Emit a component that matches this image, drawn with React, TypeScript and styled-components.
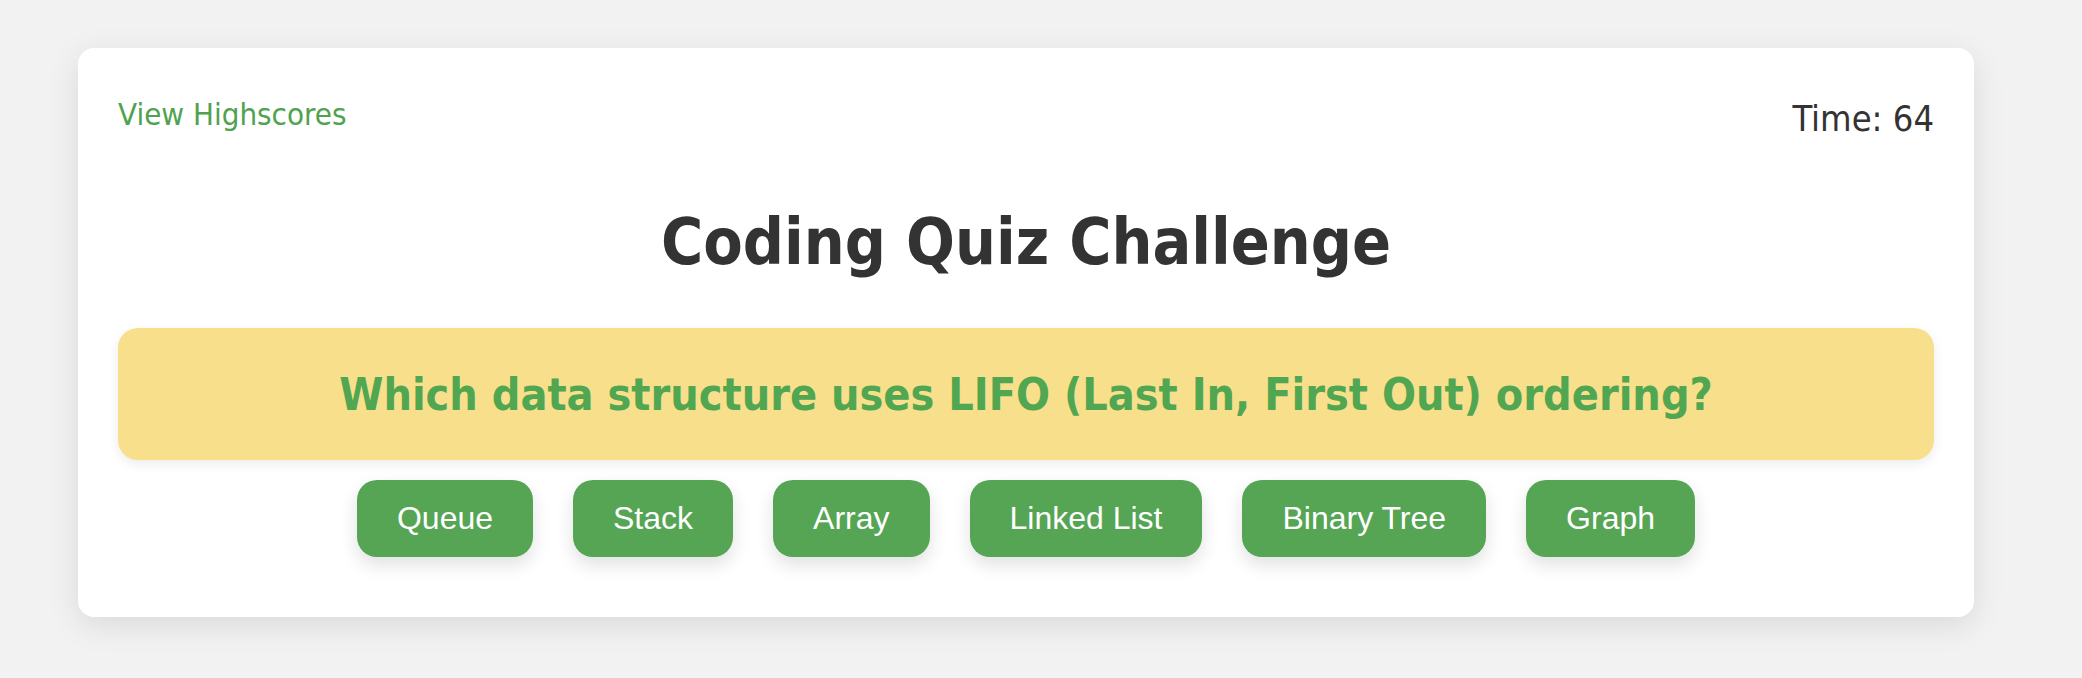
import React from "react";
import styled, { createGlobalStyle } from "styled-components";

const GlobalStyle = createGlobalStyle`
  html, body {
    margin: 0;
    padding: 0;
    background: #f2f2f2;
  }
  body {
    font-family: "DejaVu Sans Condensed", "DejaVu Sans", Tahoma, sans-serif;
    font-stretch: condensed;
  }
`;

const Page = styled.div`
  padding: 48px 108px 60px 78px;
`;

const Card = styled.main`
  background: #ffffff;
  border-radius: 16px;
  box-shadow: 0 8px 32px rgba(0, 0, 0, 0.1);
  padding: 40px;
  display: flex;
  flex-direction: column;
`;

const Header = styled.header`
  display: flex;
  justify-content: space-between;
  align-items: flex-start;
`;

const HighscoreLink = styled.a`
  font-family: "DejaVu Sans Condensed", "DejaVu Sans", Tahoma, sans-serif;
  font-stretch: condensed;
  font-size: 31px;
  color: #4fa24f;
  text-decoration: none;
  margin-top: 8px;
`;

const Timer = styled.div`
  font-family: "DejaVu Sans Condensed", "DejaVu Sans", Tahoma, sans-serif;
  font-stretch: condensed;
  font-size: 36px;
  color: #333333;
  margin-top: 10px;
`;

const Title = styled.h1`
  font-family: "DejaVu Sans Condensed", "DejaVu Sans", Tahoma, sans-serif;
  font-stretch: condensed;
  font-weight: bold;
  font-size: 64px;
  color: #333333;
  text-align: center;
  margin: 66px 0 49px;
`;

const QuestionBox = styled.section`
  background: #f8df8c;
  border-radius: 20px;
  box-shadow: 0 4px 12px rgba(0, 0, 0, 0.08);
  height: 132px;
  display: flex;
  align-items: center;
  justify-content: center;
`;

const Question = styled.h2`
  font-family: "DejaVu Sans Condensed", "DejaVu Sans", Tahoma, sans-serif;
  font-stretch: condensed;
  font-weight: bold;
  font-size: 44.5px;
  color: #51a651;
  margin: 0;
`;

const Choices = styled.div`
  display: flex;
  justify-content: center;
  flex-wrap: wrap;
`;

const ChoiceButton = styled.button`
  font-family: "Liberation Sans", Arial, sans-serif;
  font-stretch: normal;
  font-size: 32px;
  color: #ffffff;
  background: #55a554;
  border: none;
  border-radius: 20px;
  padding: 0 40px;
  height: 77px;
  margin: 20px;
  box-shadow: 0 8px 18px rgba(0, 0, 0, 0.12);
  cursor: pointer;
`;

const choices = ["Queue", "Stack", "Array", "Linked List", "Binary Tree", "Graph"];

export default function App() {
  return (
    <>
      <GlobalStyle />
      <Page>
        <Card>
          <Header>
            <HighscoreLink href="#">View Highscores</HighscoreLink>
            <Timer>Time: 64</Timer>
          </Header>
          <Title>Coding Quiz Challenge</Title>
          <QuestionBox>
            <Question>Which data structure uses LIFO (Last In, First Out) ordering?</Question>
          </QuestionBox>
          <Choices>
            {choices.map((c) => (
              <ChoiceButton key={c}>{c}</ChoiceButton>
            ))}
          </Choices>
        </Card>
      </Page>
    </>
  );
}
